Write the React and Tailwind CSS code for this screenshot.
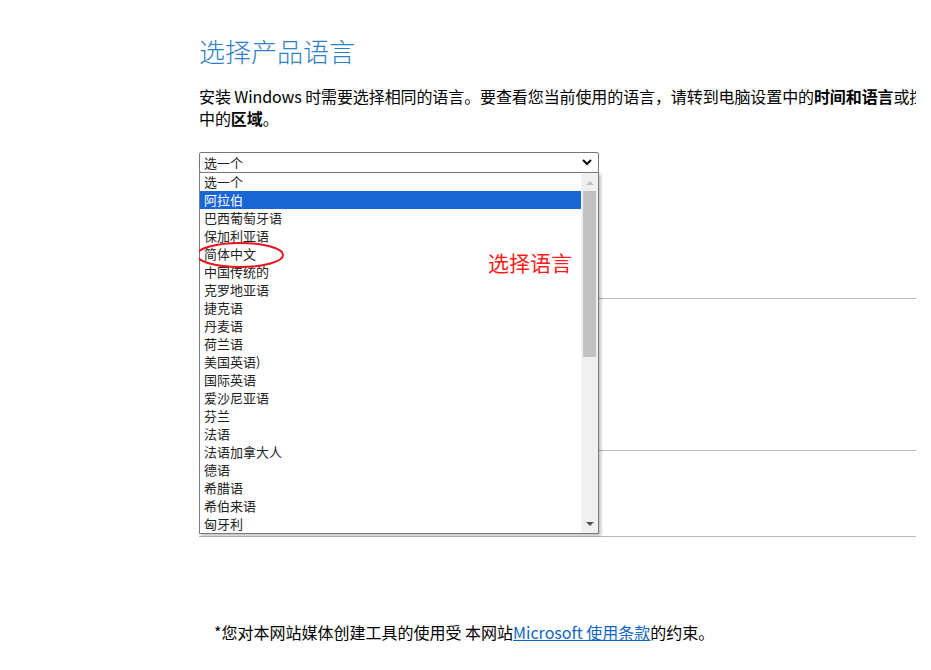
const languages = [
  '选一个',
  '阿拉伯',
  '巴西葡萄牙语',
  '保加利亚语',
  '简体中文',
  '中国传统的',
  '克罗地亚语',
  '捷克语',
  '丹麦语',
  '荷兰语',
  '美国英语)',
  '国际英语',
  '爱沙尼亚语',
  '芬兰',
  '法语',
  '法语加拿大人',
  '德语',
  '希腊语',
  '希伯来语',
  '匈牙利',
];

const font = { fontFamily: '"Noto Sans CJK SC", "Noto Sans", sans-serif' };

function Dropdown() {
  return (
    <div className="absolute left-0 top-[20px] z-10 flex h-[362px] w-[400px] border border-[#7a7a7a] bg-white shadow-[2px_2px_3px_rgba(0,0,0,0.25)]">
      <ul className="flex-1">
        {languages.map((l, i) => (
          <li
            key={l}
            className={
              'h-[18px] pl-[4px] text-[13px] leading-[18px] ' +
              (i === 1 ? 'bg-[#1a66d4] text-white' : 'text-[#222]')
            }
          >
            {l}
          </li>
        ))}
      </ul>
      <div className="flex w-[17px] flex-col items-center bg-[#f0f0f0]">
        <div className="flex h-[18px] items-center justify-center">
          <svg width="8" height="5" viewBox="0 0 8 5">
            <path d="M0 5 L4 1 L8 5 Z" fill="#c2c2c2" />
          </svg>
        </div>
        <div className="h-[166px] w-[13px] bg-[#c1c1c1]" />
        <div className="flex-1" />
        <div className="flex h-[18px] items-center justify-center">
          <svg width="8" height="5" viewBox="0 0 8 5">
            <path d="M0 0 L8 0 L4 4 Z" fill="#505050" />
          </svg>
        </div>
      </div>
    </div>
  );
}

export default function App() {
  return (
    <div className="min-h-[670px] w-[931px] bg-white text-black" style={font}>
      <div className="ml-[199px] w-[717px] overflow-hidden pt-[33px]">
        <h1 className="text-[26px] font-light leading-[36px] text-[#2f7fc6]">选择产品语言</h1>

        <p className="mt-[16px] whitespace-nowrap text-[16px] leading-[22px] tracking-[-0.1px]">
          安装 Windows 时需要选择相同的语言。要查看您当前使用的语言，请转到电脑设置中的
          <b>时间和语言</b>或控制面板
          <br />
          中的<b>区域</b>。
        </p>

        <div className="relative mt-[23px]">
          <div className="flex h-[21px] w-[400px] items-center justify-between rounded-[2px] border border-[#767676] bg-white pl-[4px] pr-[6px]">
            <span className="text-[13px] leading-[18px] text-[#222]">选一个</span>
            <svg width="10" height="7" viewBox="0 0 10 7">
              <path d="M1 1 L5 5 L9 1" fill="none" stroke="#111" strokeWidth="2.2" />
            </svg>
          </div>
          <Dropdown />

          {/* annotation */}
          <svg
            className="pointer-events-none absolute left-[-3px] top-[89px] z-20"
            width="92"
            height="28"
            viewBox="0 0 92 28"
          >
            <ellipse cx="44" cy="14" rx="43" ry="12" fill="none" stroke="#e8141b" strokeWidth="2" />
          </svg>
          <span className="absolute left-[289px] top-[97px] z-20 text-[21px] leading-[26px] text-[#ff1a1a]">
            选择语言
          </span>
        </div>

        <div className="mt-[125px] h-[152px] border-t border-[#b9b9b9]" />
        <div className="h-[86px] border-t border-[#b9b9b9]" />
        <div className="border-t border-[#b9b9b9]" />
      </div>

      <p className="ml-[214px] mt-[84px] text-[16px] leading-[22px]">
        *您对本网站媒体创建工具的使用受 本网站
        <a className="text-[#1064c2] underline">Microsoft 使用条款</a>的约束。
      </p>
    </div>
  );
}
